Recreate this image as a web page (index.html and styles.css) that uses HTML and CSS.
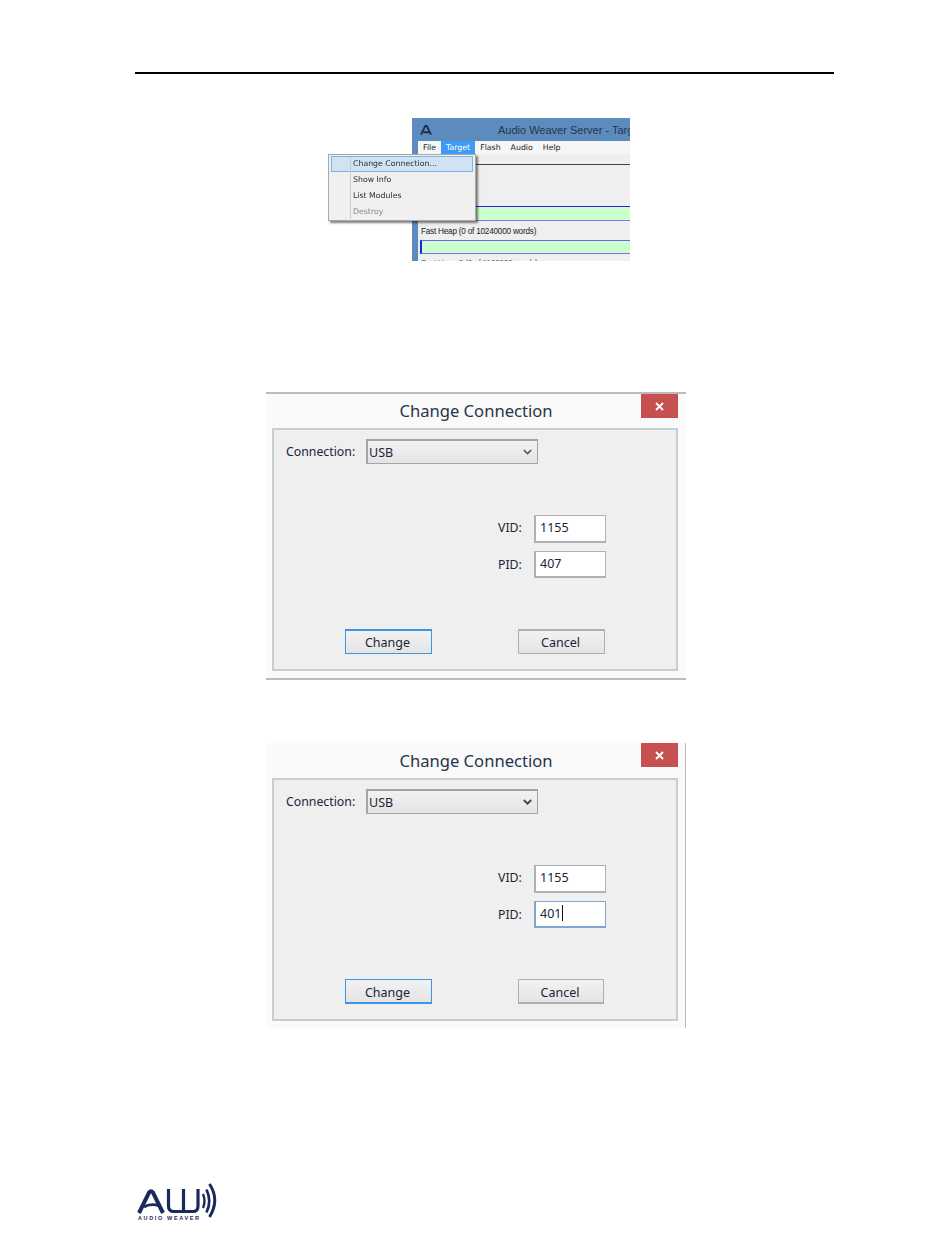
FILE: index.html
```html
<!DOCTYPE html>
<html lang="en">
<head>
<meta charset="utf-8">
<title>Change Connection</title>
<link rel="stylesheet" href="styles.css">
</head>
<body>
<main class="page">
  <hr class="rule">

  <figure class="server">
    <div class="window">
      <div class="win-title">
        <svg class="win-logo" viewBox="0 0 12 10" width="12" height="10" aria-hidden="true"><path d="M1 9.600 5 1.400Q6 .2 7 1.400L11 9.600M3.400 7.200H9" fill="none" stroke="#1f2d55" stroke-width="1.900"/></svg>
        <span class="win-name">Audio Weaver Server - Target</span>
      </div>
      <div class="win-menu">
        <span class="menu-item">File</span>
        <span class="menu-item menu-item-active">Target</span>
        <span class="menu-item">Flash</span>
        <span class="menu-item">Audio</span>
        <span class="menu-item">Help</span>
      </div>
      <div class="win-body">
        <div class="win-line"></div>
        <div class="heap heap-first"></div>
        <div class="heap-label">Fast Heap (0 of 10240000 words)</div>
        <div class="heap heap-second"></div>
        <div class="heap-label heap-label-cut">Fast Heap 2 (0 of 1120000 words)</div>
      </div>
    </div>
    <ul class="dropdown">
      <li class="drop-item drop-item-hover">Change Connection...</li>
      <li class="drop-item">Show Info</li>
      <li class="drop-item">List Modules</li>
      <li class="drop-item drop-item-off">Destroy</li>
    </ul>
  </figure>

  <section class="dialog dialog-first">
    <header class="titlebar">
      <span></span>
      <h2 class="title">Change Connection</h2>
      <span class="close"><svg viewBox="0 0 9 9" width="9" height="9" aria-hidden="true"><path d="M1 1 8 8M8 1 1 8" stroke="#fff" stroke-width="1.800"/></svg></span>
    </header>
    <div class="panel">
      <div class="conn-row">
        <span class="label conn-label">Connection:</span>
        <div class="select"><span>USB</span><svg viewBox="0 0 9 6" width="9" height="6" aria-hidden="true"><path d="M.8 1 4.500 4.600 8.200 1" fill="none" stroke="#555" stroke-width="1.600"/></svg></div>
      </div>
      <div class="fields">
        <div class="field-row"><span class="label">VID:</span><div class="input input-vid">1155</div></div>
        <div class="field-row"><span class="label">PID:</span><div class="input input-pid">407</div></div>
      </div>
      <div class="buttons">
        <button class="btn btn-default" type="button">Change</button>
        <button class="btn" type="button">Cancel</button>
      </div>
    </div>
  </section>

  <section class="dialog dialog-second">
    <header class="titlebar">
      <span></span>
      <h2 class="title">Change Connection</h2>
      <span class="close"><svg viewBox="0 0 9 9" width="9" height="9" aria-hidden="true"><path d="M1 1 8 8M8 1 1 8" stroke="#fff" stroke-width="1.800"/></svg></span>
    </header>
    <div class="panel">
      <div class="conn-row">
        <span class="label conn-label">Connection:</span>
        <div class="select"><span>USB</span><svg viewBox="0 0 9 6" width="9" height="6" aria-hidden="true"><path d="M.8 1 4.500 4.600 8.200 1" fill="none" stroke="#444" stroke-width="1.900"/></svg></div>
      </div>
      <div class="fields">
        <div class="field-row"><span class="label">VID:</span><div class="input input-vid">1155</div></div>
        <div class="field-row"><span class="label">PID:</span><div class="input input-pid input-focus">401<i class="caret"></i></div></div>
      </div>
      <div class="buttons">
        <button class="btn btn-default" type="button">Change</button>
        <button class="btn" type="button">Cancel</button>
      </div>
    </div>
  </section>

  <footer class="footer">
    <svg class="logo" viewBox="0 0 85 42" width="85" height="42" role="img" aria-label="Audio Weaver">
      <g fill="none" stroke="#1b2a5c">
        <path d="M4 33 14 12.500Q16 10 18 12.500L28 33" stroke-width="4"/>
        <path d="M9 27Q15 23 25 26" stroke-width="2.800"/>
        <path d="M33.500 9V26Q33.500 31.500 39 31.500H58Q63 31.500 63 26V9M48.500 9V31" stroke-width="3.200"/>
        <path d="M68 14Q71 21 68 28" stroke-width="2.400"/>
        <path d="M71.500 9.500Q77 21 71.500 32.500" stroke-width="2.700"/>
        <path d="M74.500 4Q85 20 74.500 37" stroke-width="3"/>
      </g>
      <text class="logo-text" x="3" y="40" textLength="61">AUDIO WEAVER</text>
    </svg>
  </footer>
</main>
</body>
</html>
```

FILE: styles.css
```css
* { box-sizing: border-box; }

html, body {
  margin: 0;
  padding: 0;
  background: #fff;
}

.page {
  width: 950px;
  height: 1237px;
  padding-top: 72px;
  overflow: hidden;
  font-family: "Noto Sans", "DejaVu Sans", sans-serif;
  color: #111;
}

.rule {
  width: 699px;
  height: 2px;
  margin: 0 0 0 135px;
  border: 0;
  background: #000;
}

/* Top screenshot: the server window and its open menu */
.server {
  position: relative;
  width: 302px;
  height: 143px;
  margin: 44px 0 0 328px;
  font-family: "DejaVu Sans", sans-serif;
  font-size: 7.800px;
  filter: blur(.35px);
}

.window {
  width: 218px;
  height: 143px;
  margin-left: 84px;
  background: #5c8bbd;
  overflow: hidden;
}

.win-title {
  display: flex;
  align-items: center;
  height: 23px;
  padding-left: 8px;
}

.win-logo { flex: none; }

.win-name {
  margin-left: 66px;
  font-family: "Liberation Sans", sans-serif;
  font-size: 11px;
  white-space: nowrap;
  color: #27354f;
}

.win-menu {
  display: flex;
  height: 13px;
  margin-left: 6px;
  background: #f6f6f6;
}

.menu-item {
  padding: 0 5px;
  line-height: 13px;
  color: #222;
}

.menu-item-active {
  background: #3d9bf5;
  color: #fff;
}

.win-body {
  height: 107px;
  margin-left: 6px;
  padding: 10px 0 0 2px;
  background: #efefef;
}

.win-line {
  height: 1px;
  margin-left: 55px;
  background: #444;
}

.heap {
  height: 15px;
  background: #ccffcc;
  border-top: 1px solid #2222ee;
  border-bottom: 1px solid #7777ee;
}

.heap-first { margin-top: 41px; }

.heap-second {
  height: 14px;
  border-top-color: #6666ee;
  border-left: 2px solid #2222ee;
}

.heap-label {
  height: 19px;
  padding-left: 1px;
  font-family: "Liberation Sans", sans-serif;
  font-size: 8.200px;
  letter-spacing: -.22px;
  line-height: 22px;
  white-space: nowrap;
  color: #222;
}

.heap-label-cut { line-height: 20px; color: #666; }

.dropdown {
  position: absolute;
  top: 36px;
  left: 0;
  width: 148px;
  height: 67px;
  margin: 0;
  padding: 1px 2px;
  list-style: none;
  background: #f0f0f0;
  border: 1px solid #a8a8a8;
  box-shadow: 2px 2px 2px rgba(0, 0, 0, .5);
}

.dropdown::before {
  content: "";
  position: absolute;
  top: 2px;
  bottom: 1px;
  left: 21px;
  width: 1px;
  background: #ccc;
}

.drop-item {
  height: 16px;
  padding-left: 22px;
  line-height: 15px;
  white-space: nowrap;
  color: #2a2a3a;
}

.drop-item-hover {
  background: #d1e2f2;
  border: 1px solid #7fb2e5;
  padding-left: 21px;
  line-height: 13px;
}

.drop-item-off { color: #888; }

/* Change Connection dialogs */
.dialog {
  width: 420px;
  margin-left: 266px;
  padding-bottom: 7px;
  background: #fafafa;
}

.dialog-first {
  margin-top: 131px;
  border-top: 2px solid #bbb;
  border-bottom: 2px solid #bbb;
}

.dialog-second {
  margin-top: 63px;
  border-right: 1px solid #bbb;
}

.titlebar {
  display: grid;
  grid-template-columns: 1fr auto 1fr;
  align-items: start;
  height: 35px;
  padding: 0 8px;
}

.dialog-second .titlebar { padding: 0 7px 0 8px; }

.dialog-first .titlebar { height: 34px; }

.title {
  margin: 0;
  padding-top: 5px;
  font-size: 16.600px;
  font-weight: 400;
  line-height: 24px;
  color: #26344a;
}

.dialog-second .title { padding-top: 6px; }

.close {
  display: flex;
  align-items: center;
  justify-content: center;
  justify-self: end;
  width: 37px;
  height: 24px;
  background: #c75050;
}

.panel {
  width: 406px;
  height: 243px;
  margin-left: 6px;
  padding: 9px 0 0 12px;
  background: #efefef;
  border: 2px solid #ccc;
}

.label {
  font-size: 12.300px;
  line-height: 18px;
  color: #1b2438;
}

.conn-row {
  display: flex;
  align-items: center;
  height: 25px;
}

.conn-label { width: 80px; }

.select {
  display: flex;
  align-items: center;
  justify-content: space-between;
  width: 172px;
  height: 25px;
  padding: 0 5px 0 1px;
  font-size: 12.500px;
  color: #1b2438;
  background: linear-gradient(#f2f2f2, #e4e4e4);
  border: 1px solid #a4a4a4;
  border-left-width: 2px;
  border-top-width: 2px;
}

.fields {
  display: flex;
  flex-direction: column;
  gap: 8px;
  margin: 51px 0 0 212px;
}

.field-row {
  display: grid;
  grid-template-columns: 36px 72px;
  justify-content: start;
  align-items: center;
}

.field-row .label { margin-top: -3px; }
.field-row + .field-row .label { margin-top: 0; }

.input {
  width: 72px;
  padding-left: 4px;
  font-size: 12.500px;
  color: #1b2438;
  background: #fff;
  border: 1px solid #aeaeb4;
  border-left-width: 2px;
  border-bottom-width: 2px;
}

.input-vid { height: 28px; line-height: 23px; }
.input-pid { height: 27px; line-height: 24px; }

.input-focus { border-color: #7ea6d0; }

.caret {
  display: inline-block;
  width: 1px;
  height: 16px;
  margin-left: 1px;
  vertical-align: -3px;
  background: #111;
}

.buttons {
  display: flex;
  gap: 86px;
  margin: 51px 0 0 59px;
}

.btn {
  width: 87px;
  height: 25px;
  padding: 0 2px 0 0;
  font-family: inherit;
  font-size: 12.500px;
  color: #1b2438;
  background: linear-gradient(#f2f2f2, #e4e4e4);
  border: 1px solid #aeaeae;
  border-top-width: 2px;
  border-left-width: 1px;
  border-bottom-width: 1px;
}

.btn-default { border-color: #3d95e6; }

.dialog-second .btn {
  border-top-width: 1px;
  border-bottom-width: 2px;
  padding-top: 2px;
}
.dialog-second .btn:last-child { width: 86px; }

/* Footer logo */
.footer { margin: 152px 0 0 135px; }

.logo { display: block; }

.logo-text {
  font-family: "Liberation Sans", sans-serif;
  font-size: 5.500px;
  font-weight: 700;
  fill: #1b2a5c;
}
```
